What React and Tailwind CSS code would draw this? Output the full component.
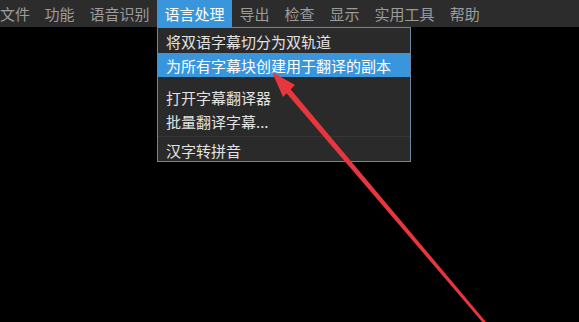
import React from 'react';

const menus = ['文件', '功能', '语音识别', '语言处理', '导出', '检查', '显示', '实用工具', '帮助'];

const MenuRow = ({ label, active, h = 'h-6' }) => (
  <div
    className={`${h} flex items-center pl-2 text-[15px] leading-none ${
      active ? 'bg-[#3a96dc] text-white' : 'text-[#e2e2e2]'
    }`}
  >
    {label}
  </div>
);

const Arrow = () => (
  <svg className="absolute left-0 top-0 pointer-events-none" width="579" height="322" viewBox="0 0 579 322">
    <polygon points="272,72 295,85 283,97" fill="#e8363f" />
    <polygon points="289.5,88 285.5,92 484,324 486,322" fill="#e8363f" />
  </svg>
);

export default function App() {
  return (
    <div
      className="relative w-[579px] h-[322px] overflow-hidden bg-black"
      style={{ fontFamily: '"Noto Sans CJK SC", "Noto Sans", sans-serif' }}
    >
      {/* menu bar */}
      <div className="flex h-[27px] bg-[#2c2c2c] text-[15px] leading-none">
        {menus.map((m, i) => (
          <div
            key={m}
            className={`flex items-center ${i === 0 ? 'pl-0 pr-[7px]' : 'px-[7.5px]'} ${
              m === '语言处理' ? 'bg-[#3a96dc] text-white' : 'text-[#9c9c9c]'
            }`}
          >
            {m}
          </div>
        ))}
      </div>

      {/* dropdown */}
      <div className="absolute left-[157px] top-[27px] w-[254px] h-[135px] bg-[#2a2a2a] border border-[#6a86a3] pt-[1px]">
        <MenuRow label="将双语字幕切分为双轨道" />
        <MenuRow label="为所有字幕块创建用于翻译的副本" active />
        <div className="h-2" />
        <MenuRow label="打开字幕翻译器" />
        <MenuRow label="批量翻译字幕..." />
        <div className="h-[6px] flex items-center">
          <div className="h-px w-full bg-[#363636]" />
        </div>
        <MenuRow label="汉字转拼音" h="h-[22px]" />
      </div>

      <Arrow />
    </div>
  );
}
